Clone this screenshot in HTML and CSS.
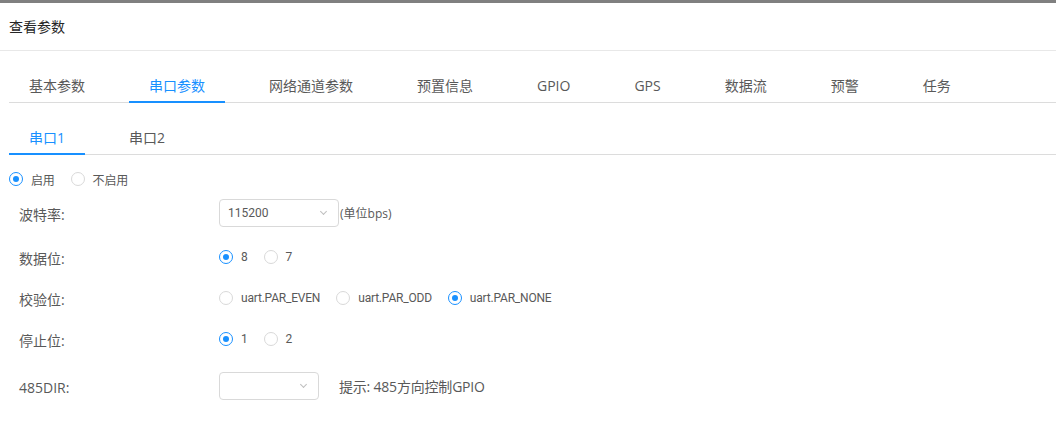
FILE: index.html
```html
<!DOCTYPE html>
<html lang="zh-CN">
<head>
  <meta charset="UTF-8">
  <title>查看参数</title>
  <link rel="stylesheet" href="styles.css">
</head>
<body>
  <div class="topbar"></div>
  <div class="header">查看参数</div>

  <!-- 主选项卡 -->
  <div class="tabs main-tabs">
    <div class="tab">基本参数</div>
    <div class="tab active">串口参数</div>
    <div class="tab">网络通道参数</div>
    <div class="tab">预置信息</div>
    <div class="tab">GPIO</div>
    <div class="tab">GPS</div>
    <div class="tab">数据流</div>
    <div class="tab">预警</div>
    <div class="tab">任务</div>
  </div>

  <!-- 串口选项卡 -->
  <div class="tabs sub-tabs">
    <div class="tab active">串口1</div>
    <div class="tab">串口2</div>
  </div>

  <div class="enable-row">
    <label class="radio checked"><span class="dot"></span>启用</label>
    <label class="radio"><span class="dot"></span>不启用</label>
  </div>

  <div class="form">
    <div class="form-row row-select">
      <div class="label">波特率:</div>
      <div class="control">
        <div class="select w120"><span>115200</span><span class="arrow"></span></div>
        <span class="unit">(单位bps)</span>
      </div>
    </div>
    <div class="form-row">
      <div class="label">数据位:</div>
      <div class="control">
        <label class="radio checked"><span class="dot"></span>8</label>
        <label class="radio"><span class="dot"></span>7</label>
      </div>
    </div>
    <div class="form-row">
      <div class="label">校验位:</div>
      <div class="control">
        <label class="radio"><span class="dot"></span>uart.PAR_EVEN</label>
        <label class="radio"><span class="dot"></span>uart.PAR_ODD</label>
        <label class="radio checked"><span class="dot"></span>uart.PAR_NONE</label>
      </div>
    </div>
    <div class="form-row last-radio">
      <div class="label">停止位:</div>
      <div class="control">
        <label class="radio checked"><span class="dot"></span>1</label>
        <label class="radio"><span class="dot"></span>2</label>
      </div>
    </div>
    <div class="form-row row-select">
      <div class="label">485DIR:</div>
      <div class="control">
        <div class="select w100"><span></span><span class="arrow"></span></div>
        <span class="hint">提示: 485方向控制GPIO</span>
      </div>
    </div>
  </div>
</body>
</html>
```

FILE: styles.css
```css
* {
  margin: 0;
  padding: 0;
  box-sizing: border-box;
}
body {
  font-family: "Open Sans", "Noto Sans CJK SC", sans-serif;
  color: #595959;
  background: #fff;
}
.topbar {
  height: 3px;
  background: #808080;
}
.header {
  height: 48px;
  line-height: 47px;
  padding-left: 9px;
  font-size: 14px;
  color: #262626;
  border-bottom: 1px solid #e8e8e8;
}
.tabs {
  display: flex;
  margin-left: 9px;
  border-bottom: 1px solid #dcdcdc;
}
.main-tabs {
  margin-top: 20px;
}
.sub-tabs {
  margin-top: 20px;
}
.tab {
  padding: 0 20px;
  margin-right: 24px;
  height: 32px;
  line-height: 30px;
  font-size: 14px;
  color: #595959;
  border-bottom: 2px solid transparent;
  margin-bottom: -1px;
}
.tab.active {
  color: #1890ff;
  border-bottom-color: #1890ff;
}
.enable-row {
  display: flex;
  align-items: center;
  height: 22px;
  margin-top: 13px;
  padding-left: 9px;
}
.radio {
  display: inline-flex;
  align-items: center;
  font-family: Roboto, "Noto Sans CJK SC", sans-serif;
  font-size: 12px;
  letter-spacing: -0.2px;
  color: #595959;
  margin-right: 16px;
}
.radio .dot {
  width: 14px;
  height: 14px;
  border: 1px solid #d9d9d9;
  border-radius: 50%;
  margin-right: 8px;
  display: flex;
  align-items: center;
  justify-content: center;
}
.radio.checked .dot {
  border-color: #1890ff;
}
.radio.checked .dot::after {
  content: "";
  width: 6px;
  height: 6px;
  border-radius: 50%;
  background: #1890ff;
}
.form {
  padding-left: 19px;
  margin-top: 9px;
}
.form-row {
  display: flex;
  align-items: center;
  min-height: 22px;
  margin-bottom: 19px;
}
.form-row.row-select {
  min-height: 28px;
}
.form-row.last-radio {
  margin-bottom: 22px;
}
.label {
  width: 200px;
  font-size: 14px;
  padding-top: 2px;
}
.control {
  display: flex;
  align-items: center;
}
.select {
  height: 28px;
  border: 1px solid #d9d9d9;
  border-radius: 4px;
  display: flex;
  align-items: center;
  justify-content: space-between;
  padding: 0 12px 0 8px;
  font-family: Roboto, "Noto Sans CJK SC", sans-serif;
  font-size: 12px;
  color: #595959;
}
.w120 { width: 120px; }
.w100 { width: 100px; }
.arrow {
  width: 5px;
  height: 5px;
  border-right: 1px solid #bfbfbf;
  border-bottom: 1px solid #bfbfbf;
  transform: rotate(45deg);
  margin-top: -3px;
}
.unit {
  font-size: 12px;
  margin-left: 1px;
}
.hint {
  font-size: 14px;
  letter-spacing: -0.2px;
  margin-left: 20px;
}
```
